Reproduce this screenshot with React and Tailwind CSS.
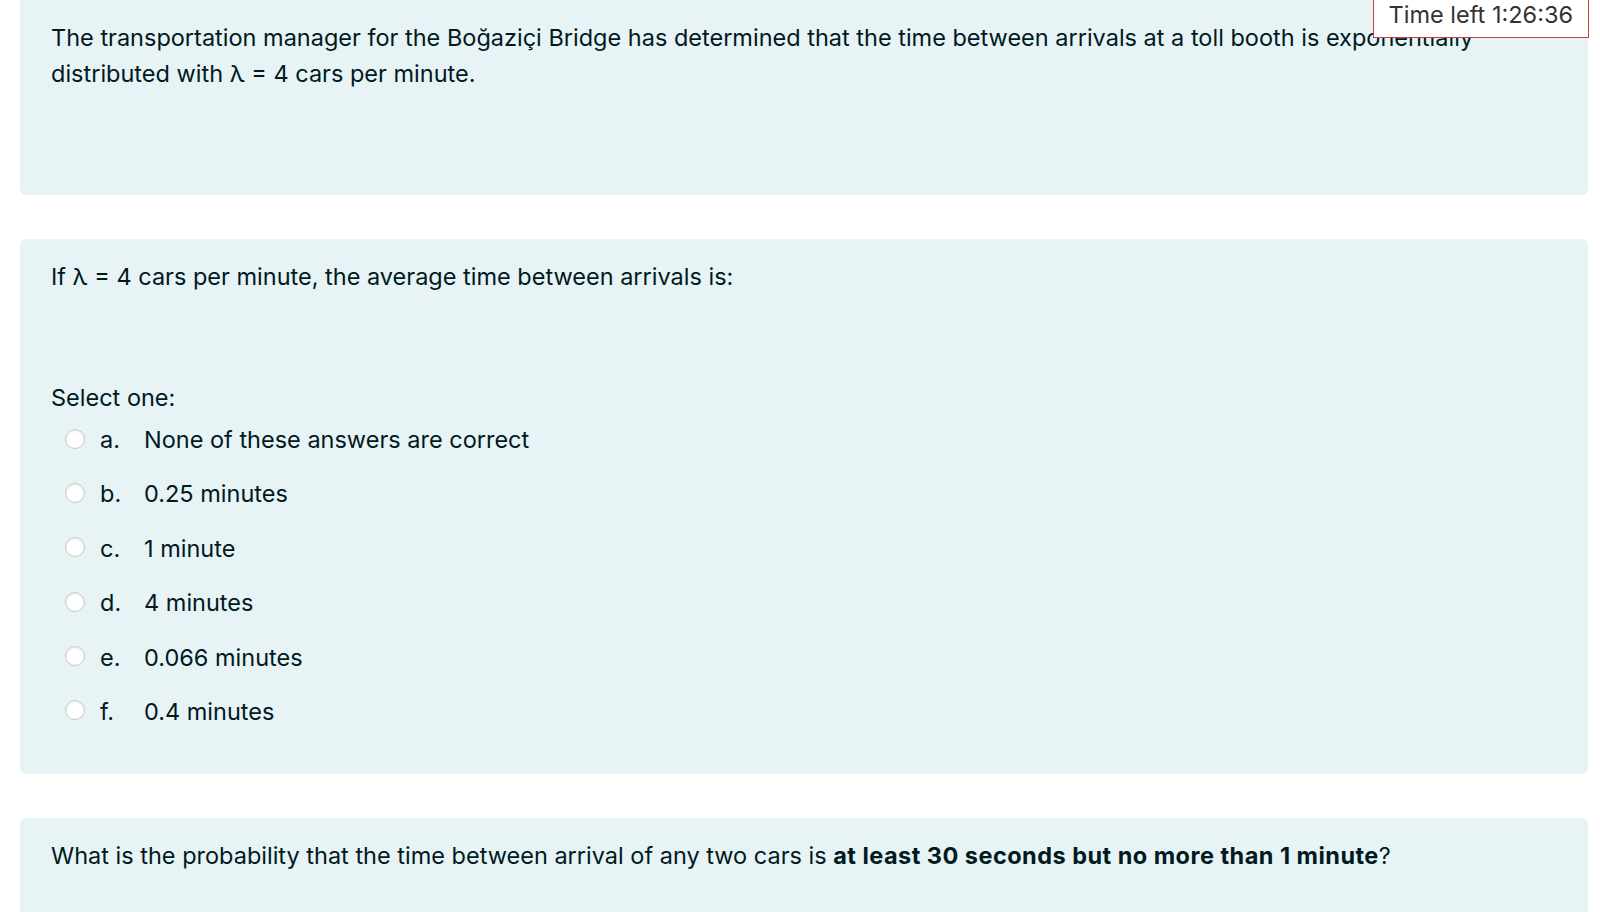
import { useState } from "react";

const options = [
  { letter: "a.", text: "None of these answers are correct" },
  { letter: "b.", text: "0.25 minutes" },
  { letter: "c.", text: "1 minute" },
  { letter: "d.", text: "4 minutes" },
  { letter: "e.", text: "0.066 minutes" },
  { letter: "f.", text: "0.4 minutes" },
];

const Radio = ({ checked, onClick }) => (
  <span
    onClick={onClick}
    className="mb-[3px] flex h-[20px] w-[20px] shrink-0 cursor-pointer items-center justify-center rounded-full border border-[#c6cacc] bg-white shadow-[inset_0_1px_2px_rgba(0,0,0,0.1)]"
  >
    {checked && <span className="h-[8px] w-[8px] rounded-full bg-[#0f6cbf]"></span>}
  </span>
);

const App = () => {
  const [answer, setAnswer] = useState(null);

  return (
    <div className="relative min-h-screen bg-white font-['Inter',sans-serif] text-[23.5px] leading-[36px] text-[#001a1e]">
      {/* quiz timer */}
      <div className="absolute right-[11px] top-[-1px] z-10 border border-[#c8423b] bg-white px-[15px] pb-[8px] leading-[29px] text-[#333]">
        Time left 1:26:36
      </div>

      <div className="flex flex-col gap-[44px] pl-[20px] pr-[12px]">
        <div className="rounded-b-[6px] bg-[#e7f3f5] px-[31px] pb-[103px] pt-[20px]">
          <p>
            The transportation manager for the Boğaziçi Bridge has determined that the time between arrivals at a toll
            booth is exponentially distributed with λ = 4 cars per minute.
          </p>
        </div>

        <div className="rounded-[6px] bg-[#e7f3f5] px-[31px] pb-[44px] pt-[20px]">
          <p className="mb-[85px]">If λ = 4 cars per minute, the average time between arrivals is:</p>
          <div>Select one:</div>
          <div className="mt-[6px] flex flex-col gap-[18.4px]">
            {options.map((o, i) => (
              <div key={o.letter} className="flex items-center pl-[14px]">
                <Radio checked={answer === i} onClick={() => setAnswer(i)} />
                <span className="ml-[15px] w-[44px]">{o.letter}</span>
                <span>{o.text}</span>
              </div>
            ))}
          </div>
        </div>

        <div className="rounded-t-[6px] bg-[#e7f3f5] px-[31px] pb-[80px] pt-[20px]">
          <p>
            What is the probability that the time between arrival of any two cars is{" "}
            <strong className="font-bold tracking-[0.02em]">at least 30 seconds but no more than 1 minute</strong>?
          </p>
        </div>
      </div>
    </div>
  );
};

export default App;
